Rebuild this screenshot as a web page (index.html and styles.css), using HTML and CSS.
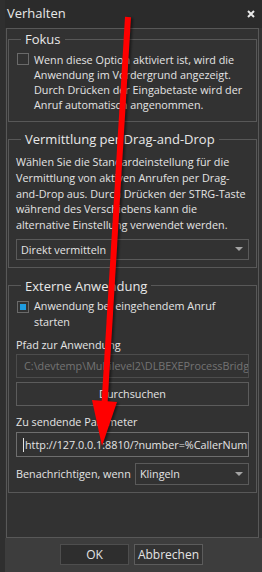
FILE: index.html
```html
<!DOCTYPE html>
<html lang="de">
<head>
	<meta charset="UTF-8">
	<title>Verhalten</title>
	<link rel="stylesheet" href="styles.css">
</head>
<body>
	<div class="window">
		<div class="titlebar">
			<span class="title">Verhalten</span>
			<svg class="close" width="8" height="8" viewBox="0 0 8 8"><path d="M1 1L7 7M7 1L1 7" stroke="#e8e8e8" stroke-width="2"/></svg>
		</div>
		<div class="panel">
			<fieldset class="group fokus">
				<legend>Fokus</legend>
				<div class="check">
					<span class="box"></span>
					<p>Wenn diese Option aktiviert ist, wird die Anwendung im Vordergrund angezeigt. Durch Drücken der Eingabetaste wird der Anruf automatisch angenommen.</p>
				</div>
			</fieldset>
			<fieldset class="group drag">
				<legend>Vermittlung per Drag-and-Drop</legend>
				<p class="info">Wählen Sie die Standardeinstellung für die Vermittlung von aktiven Anrufen per Drag-and-Drop aus. Durch Drücken der STRG-Taste während des Verschiebens kann die alternative Einstellung verwendet werden.</p>
				<div class="select wide"><span>Direkt vermitteln</span><i class="arrow"></i></div>
			</fieldset>
			<fieldset class="group extern">
				<legend>Externe Anwendung</legend>
				<div class="check">
					<span class="box checked"></span>
					<p>Anwendung bei eingehendem Anruf starten</p>
				</div>
				<label class="label path-label">Pfad zur Anwendung</label>
				<div class="field disabled">C:\devtemp\Multilevel2\DLBEXEProcessBridg</div>
				<button class="btn browse">Durchsuchen</button>
				<label class="label param-label">Zu sendende Parameter</label>
				<div class="field focus"><span class="caret"></span>http://127.0.0.1:8810/?number=%CallerNuml</div>
				<div class="row">
					<span class="label">Benachrichtigen, wenn</span>
					<div class="select small"><span>Klingeln</span><i class="arrow"></i></div>
				</div>
			</fieldset>
		</div>
		<div class="footer">
			<button class="btn ok">OK</button>
			<button class="btn">Abbrechen</button>
		</div>
		<svg class="marker" width="257" height="572" viewBox="0 0 257 572">
			<line x1="123" y1="17" x2="99.5" y2="404" stroke="#ff0000" stroke-width="6"/>
			<polygon points="87,400 112,402 97,446" fill="#ff0000"/>
		</svg>
	</div>
</body>
</html>
```

FILE: styles.css
```css
* { margin: 0; padding: 0; box-sizing: border-box; }
body {
	background: #2f2f2f;
	font: 10.8px/15px "Open Sans", "Noto Sans", sans-serif;
	color: #e4e4e4;
	height: 572px;
	overflow: hidden;
}
.window {
	margin-left: 5px;
	width: 257px;
	height: 572px;
	background: #323232;
	display: flex;
	flex-direction: column;
	position: relative;
	overflow: hidden;
}
.titlebar {
	height: 28px;
	background: #2b2b2b;
	display: flex;
	align-items: center;
	justify-content: space-between;
	padding: 0 7px 2px 2px;
}
.title {
	font-size: 13px;
	color: #e8e8e8;
}
.close { margin-top: 1px; }
.panel {
	height: 510px;
	width: 253px;
	margin-left: 1px;
	border: 1px solid #585858;
	padding: 1px 1px 0;
	display: flex;
	flex-direction: column;
}
.group {
	min-width: 0;
	border: 1px solid #585858;
	padding: 0 6px 7px 7px;
}
.group legend {
	font-size: 13px;
	line-height: 18px;
	margin-left: 5px;
	padding: 0 4px;
	color: #e8e8e8;
}
.group + .group { margin-top: 8px; }
.group.extern { margin-top: 9px; }
.fokus { padding-top: 4px; padding-bottom: 9px; }
.check {
	display: flex;
	align-items: flex-start;
	gap: 5px;
	padding-left: 1px;
}
.check p { flex: 1; }
.box {
	flex: none;
	width: 12px;
	height: 12px;
	border: 1px solid #6a6a6a;
	margin-top: 1px;
	padding: 2px;
}
.box.checked::after {
	content: '';
	display: block;
	width: 100%;
	height: 100%;
	background: #1e9ce0;
}
.info {
	line-height: 15.8px;
	padding-top: 6px;
}
.select {
	height: 22px;
	border: 1px solid #5a5a5a;
	background: #323232;
	display: flex;
	align-items: center;
	justify-content: space-between;
	padding: 0 4px 0 4px;
}
.select.wide { margin-top: 6px; height: 21px; margin-right: 1px; }
.select.small { width: 114px; margin-right: 1px; }
.arrow {
	width: 0;
	height: 0;
	border-left: 4px solid transparent;
	border-right: 4px solid transparent;
	border-top: 4px solid #a4a4a4;
	margin-right: 1px;
}
.extern .check { padding-top: 3px; line-height: 16px; }
.extern .check .box { margin-top: 3px; }
.label { display: block; line-height: 16px; }
.path-label { margin-top: 7px; }
.param-label { margin-top: 8px; }
.field {
	margin: 1px 1px 0 0;
	height: 24px;
	border: 1px solid #4c4c4c;
	padding: 0 7px;
	line-height: 22px;
	white-space: nowrap;
	overflow: hidden;
}
.field.disabled { color: #747474; }
.field.focus {
	margin-top: 2px;
	height: 25px;
	line-height: 23px;
	border-color: #6e6e6e;
	padding-left: 6px;
}
.caret {
	display: inline-block;
	width: 1px;
	height: 14px;
	background: #e4e4e4;
	vertical-align: -3px;
	margin-right: 1px;
}
.btn {
	font: inherit;
	color: #e4e4e4;
	background: #333333;
	border: 1px solid #5c5c5c;
	height: 24px;
}
.browse {
	width: calc(100% - 1px);
	margin-top: 4px;
}
.row {
	display: flex;
	align-items: center;
	justify-content: space-between;
	margin-top: 6px;
}
.footer {
	flex: 1;
	background: #3d3d3d;
	display: flex;
	justify-content: center;
	gap: 5px;
	padding: 6px 4px 0 0;
}
.footer .btn {
	width: 69px;
	height: 21px;
	font-size: 12px;
}
.footer .ok {
	background: #2e2e2e;
	border-color: #4e4e4e;
}
.marker {
	position: absolute;
	top: 0;
	left: 0;
	pointer-events: none;
	filter: drop-shadow(2px 1px 1px rgba(0, 0, 0, .45));
}
```
